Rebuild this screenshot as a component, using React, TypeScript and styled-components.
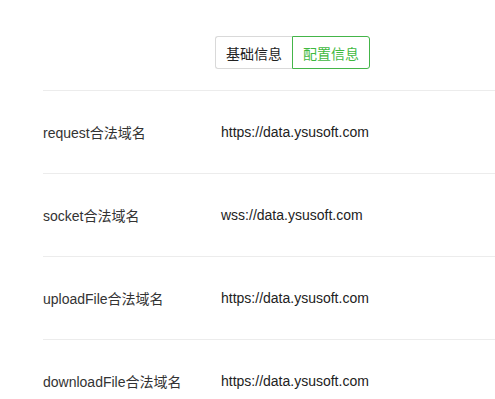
import React from 'react'
import styled, { createGlobalStyle } from 'styled-components'

const GlobalStyle = createGlobalStyle`
  body {
    margin: 0;
    background: #fff;
    font-family: "Liberation Sans", Arial, "Noto Sans CJK SC", sans-serif;
  }
`

const Page = styled.div`
  padding: 36px 0 0 43px;
  width: 452px;
  height: 363px;
  overflow: hidden;
`

const TabBar = styled.div`
  display: flex;
  padding-left: 172px;
  height: 33px;
  margin-bottom: 21px;
`

const Tab = styled.div<{ $active?: boolean }>`
  width: 77px;
  display: flex;
  align-items: center;
  justify-content: center;
  font-size: 14px;
  box-sizing: border-box;
  color: ${(p) => (p.$active ? '#3fb93f' : '#222')};
  border: 1px solid ${(p) => (p.$active ? '#44b549' : '#d9d9d9')};
  &:first-child {
    border-right: none;
    border-radius: 3px 0 0 3px;
  }
  &:last-child {
    width: 78px;
    border-radius: 0 3px 3px 0;
  }
`

const Row = styled.div`
  display: grid;
  grid-template-columns: 178px 1fr;
  align-items: center;
  height: 82px;
  border-top: 1px solid #ececec;
  font-size: 14px;
  color: #333;
`

const Value = styled.span`
  color: #222;
`

const rows = [
  ['request合法域名', 'https://data.ysusoft.com'],
  ['socket合法域名', 'wss://data.ysusoft.com'],
  ['uploadFile合法域名', 'https://data.ysusoft.com'],
  ['downloadFile合法域名', 'https://data.ysusoft.com'],
]

export default function App() {
  return (
    <>
      <GlobalStyle />
      <Page>
        <TabBar>
          <Tab>基础信息</Tab>
          <Tab $active>配置信息</Tab>
        </TabBar>
        {rows.map(([label, value]) => (
          <Row key={label}>
            <span>{label}</span>
            <Value>{value}</Value>
          </Row>
        ))}
      </Page>
    </>
  )
}
